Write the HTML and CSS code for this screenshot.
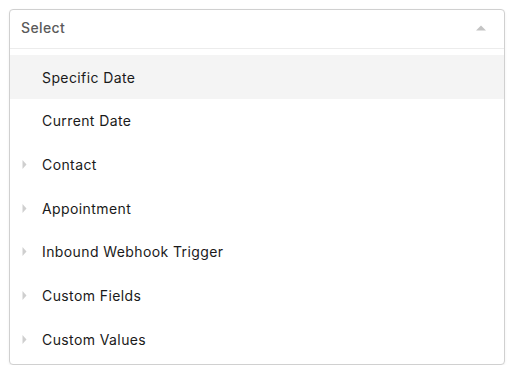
FILE: index.html
```html
<!DOCTYPE html>
<html>
<head>
<meta charset="utf-8">
<link rel="stylesheet" href="styles.css">
</head>
<body>
<div class="select">
  <div class="select-head">
    <span class="placeholder">Select</span>
    <svg class="arrow-up" width="10" height="6" viewBox="0 0 10 6"><path d="M0 5.5 L5 0.5 L10 5.5 Z" fill="#c4c4c4"/></svg>
  </div>
  <ul class="options">
    <li class="option active"><span class="caret-space"></span><span>Specific Date</span></li>
    <li class="option"><span class="caret-space"></span><span>Current Date</span></li>
    <li class="option"><span class="caret-space"><svg width="5" height="9" viewBox="0 0 5 9"><path d="M0.5 0 L4.5 4.5 L0.5 9 Z" fill="#cfcfcf"/></svg></span><span>Contact</span></li>
    <li class="option"><span class="caret-space"><svg width="5" height="9" viewBox="0 0 5 9"><path d="M0.5 0 L4.5 4.5 L0.5 9 Z" fill="#cfcfcf"/></svg></span><span>Appointment</span></li>
    <li class="option"><span class="caret-space"><svg width="5" height="9" viewBox="0 0 5 9"><path d="M0.5 0 L4.5 4.5 L0.5 9 Z" fill="#cfcfcf"/></svg></span><span>Inbound Webhook Trigger</span></li>
    <li class="option"><span class="caret-space"><svg width="5" height="9" viewBox="0 0 5 9"><path d="M0.5 0 L4.5 4.5 L0.5 9 Z" fill="#cfcfcf"/></svg></span><span>Custom Fields</span></li>
    <li class="option"><span class="caret-space"><svg width="5" height="9" viewBox="0 0 5 9"><path d="M0.5 0 L4.5 4.5 L0.5 9 Z" fill="#cfcfcf"/></svg></span><span>Custom Values</span></li>
  </ul>
</div>
</body>
</html>
```

FILE: styles.css
```css
html, body {
  margin: 0;
  padding: 0;
  background: #ffffff;
}
body {
  padding: 9px 7px 0 9px;
  font-family: "Inter", "Liberation Sans", Arial, sans-serif;
  letter-spacing: 0.4px;
}
.select {
  width: 494px;
  height: 354px;
  border: 1px solid #d0d0d0;
  border-radius: 4px;
  background: #fff;
  box-shadow: 0 1px 3px rgba(0,0,0,0.06);
  overflow: hidden;
}
.select-head {
  height: 38px;
  border-bottom: 1px solid #ececec;
  display: flex;
  align-items: center;
  justify-content: space-between;
  padding: 0 18px 3px 11px;
  box-sizing: border-box;
  height: 39px;
}
.placeholder {
  font-size: 14px;
  font-weight: 500;
  color: #5a5a5a;
}
.arrow-up {
  display: block;
  margin-top: 1px;
}
.options {
  list-style: none;
  margin: 0;
  padding: 6px 0 0 0;
}
.option {
  height: 43.67px;
  display: flex;
  align-items: center;
  font-size: 14px;
  color: #1a1a1a;
  padding-left: 12px;
  padding-top: 1px;
  box-sizing: border-box;
}
.option.active {
  background: #f4f4f4;
}
.caret-space {
  width: 20px;
  display: flex;
  align-items: center;
}
.caret-space svg {
  display: block;
}
```
